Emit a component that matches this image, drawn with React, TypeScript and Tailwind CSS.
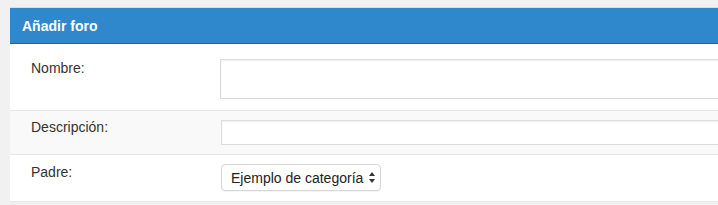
export default function App() {
  return (
    <div className="h-[205px] overflow-hidden bg-[#f1f1f1] pt-[7px] pl-[10px]" style={{ fontFamily: '"Liberation Sans", Arial, sans-serif' }}>
      <div className="border-t border-[#dedede] bg-[#f8f8f8] overflow-hidden">
        {/* header */}
        <div className="h-[36px] bg-[#2e88cb] border-b border-[#2364a3] pl-[12px] pt-[9px]">
          <h2 className="text-white text-[14px] font-bold leading-[18px]">Añadir foro</h2>
        </div>

        {/* Nombre */}
        <div className="flex bg-white border-b border-[#e6e6e6] h-[67px]">
          <label className="w-[210px] shrink-0 pl-[21px] pt-[15px] text-[14px] leading-[18px] text-[#333]">Nombre:</label>
          <div className="flex-1 pt-[15px] -mr-[20px]">
            <div className="h-[40px] border border-[#dcdcdc] bg-white shadow-[inset_0_1px_2px_rgba(0,0,0,0.07)]" />
          </div>
        </div>

        {/* Descripción */}
        <div className="flex bg-[#f9f9f9] border-b border-[#e6e6e6] h-[44px]">
          <label className="w-[211px] shrink-0 pl-[21px] pt-[7px] text-[14px] leading-[18px] text-[#333]">Descripción:</label>
          <div className="flex-1 pt-[9px] -mr-[20px]">
            <div className="h-[25px] border border-[#dcdcdc] bg-white shadow-[inset_0_1px_2px_rgba(0,0,0,0.07)]" />
          </div>
        </div>

        {/* Padre */}
        <div className="flex bg-white border-b border-[#e6e6e6] h-[47px]">
          <label className="w-[211px] shrink-0 pl-[21px] pt-[8px] text-[14px] leading-[18px] text-[#333]">Padre:</label>
          <div className="pt-[9px]">
            <div className="flex items-center h-[27px] w-[160px] border border-[#d6d6d6] rounded-[4px] bg-white pl-[9px] pr-[5px] shadow-[0_1px_1px_rgba(0,0,0,0.04)]">
              <span className="text-[14px] leading-none text-[#222] whitespace-nowrap">Ejemplo de categoría</span>
              <svg className="ml-auto" width="6" height="11" viewBox="0 0 6 11">
                <path d="M3 0 L6 4 L0 4 Z" fill="#333" />
                <path d="M0 7 L6 7 L3 11 Z" fill="#333" />
              </svg>
            </div>
          </div>
        </div>
      </div>
    </div>
  );
}
